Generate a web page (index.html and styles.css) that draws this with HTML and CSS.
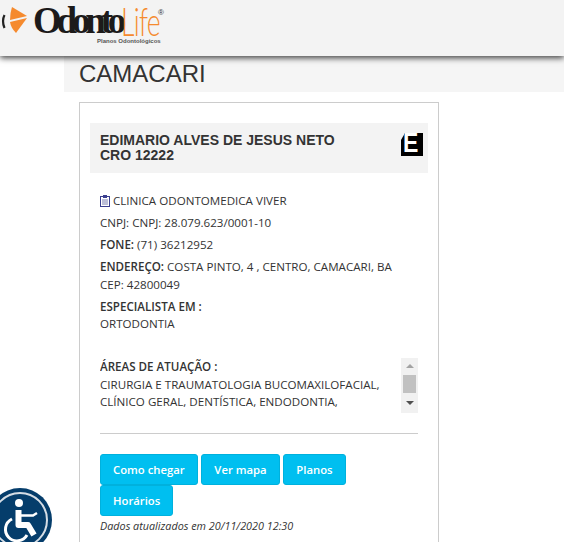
FILE: index.html
```html
<!DOCTYPE html>
<html lang="pt-BR">
<head>
    <meta charset="UTF-8">
    <meta name="viewport" content="width=device-width, initial-scale=1.0">
    <title>OdontoLife - Camacari</title>
    <link rel="stylesheet" href="styles.css">
</head>
<body>

<!-- Topo -->
<header class="topo">
    <div class="logo">
        <svg class="logo-mark" width="30" height="36" viewBox="0 0 30 36">
            <path d="M4.5 15 Q1.5 21 4.5 28" fill="none" stroke="#222" stroke-width="2.2"/>
            <path d="M12 7 L27 16 L10 20 Q10 13 12 7Z" fill="#f58a2e"/>
            <path d="M10 22 L27 18 L16 33 Q11 28 10 22Z" fill="#f58a2e"/>
        </svg>
        <div class="logo-txt">
            <div class="logo-nome"><span class="logo-odonto">Odonto</span><span class="logo-life">Life</span><span class="logo-reg">®</span></div>
            <div class="logo-sub">Planos Odontológicos</div>
        </div>
    </div>
</header>

<main class="conteudo">
    <h1 class="cidade">CAMACARI</h1>

    <div class="card">
        <div class="card-head">
            <div class="nome">EDIMARIO ALVES DE JESUS NETO<br>CRO 12222</div>
            <div class="selo"><span>E</span></div>
        </div>

        <div class="dados">
            <p class="linha">
                <svg class="ico" width="10" height="12" viewBox="0 0 10 12">
                    <rect x="0.5" y="1.5" width="9" height="10" fill="none" stroke="#3b3f8f"/>
                    <rect x="3" y="0" width="4" height="3" fill="#3b3f8f"/>
                    <path d="M2 5h6M2 7h6M2 9h6" stroke="#7a7fb0"/>
                </svg>
                CLINICA ODONTOMEDICA VIVER
            </p>
            <p class="linha">CNPJ: CNPJ: 28.079.623/0001-10</p>
            <p class="linha"><b>FONE:</b> (71) 36212952</p>
            <p class="linha"><b>ENDEREÇO:</b> COSTA PINTO, 4 , CENTRO, CAMACARI, BA<br>CEP: 42800049</p>
            <p class="linha"><b>ESPECIALISTA EM :</b><br>ORTODONTIA</p>
        </div>

        <div class="areas">
            <div class="areas-txt">
                <b>ÁREAS DE ATUAÇÃO :</b><br>
                CIRURGIA E TRAUMATOLOGIA BUCOMAXILOFACIAL,<br>
                CLÍNICO GERAL, DENTÍSTICA, ENDODONTIA,
            </div>
            <div class="barra">
                <span class="seta-cima"></span>
                <span class="barra-pos"></span>
                <span class="seta-baixo"></span>
            </div>
        </div>

        <hr class="divisor">

        <div class="botoes">
            <a class="btn" href="#">Como chegar</a>
            <a class="btn" href="#">Ver mapa</a>
            <a class="btn" href="#">Planos</a>
            <a class="btn" href="#">Horários</a>
        </div>
        <p class="atualizado">Dados atualizados em 20/11/2020 12:30</p>
    </div>
</main>

<!-- Acessibilidade -->
<a class="acess" href="#">
    <svg width="64" height="64" viewBox="0 0 64 64">
        <circle cx="32" cy="32" r="32" fill="#053d6b"/>
        <circle cx="32" cy="32" r="27" fill="none" stroke="#d5dde5" stroke-width="2"/>
        <circle cx="31" cy="15" r="4" fill="#fff"/>
        <path d="M30.5 22 V37 H40 L46 47" fill="none" stroke="#fff" stroke-width="6" stroke-linejoin="round"/>
        <path d="M32 27.5 H45 L49 25" fill="none" stroke="#fff" stroke-width="2.5"/>
        <path d="M24 31 A11.5 11.5 0 1 0 39 47" fill="none" stroke="#fff" stroke-width="3"/>
    </svg>
</a>

</body>
</html>
```

FILE: styles.css
```css
html, body {
    height: 100%;
    overflow: hidden;
}
body {
    margin: 0;
    font-family: "Open Sans", sans-serif;
    font-size: 11.6px;
    color: #333;
    background: #fff;
}
.topo {
    height: 56px;
    background: #f3f3f3;
    box-shadow: 0 2px 6px rgba(0, 0, 0, 0.75);
    position: relative;
}
.logo {
    display: flex;
}
.logo-txt {
    margin-left: 3px;
}
.logo-nome {
    display: flex;
    height: 34px;
    margin-top: 4px;
    line-height: 34px;
}
.logo-odonto {
    width: 88px;
    font-family: "Liberation Serif", serif;
    font-size: 37px;
    font-weight: bold;
    letter-spacing: -5.2px;
    color: #1c1a1a;
}
.logo-life {
    width: 37px;
    font-family: Lato, sans-serif;
    font-size: 39px;
    font-weight: 300;
    letter-spacing: -1px;
    color: #f58a2e;
    transform: scaleX(0.68);
    transform-origin: left;
}
.logo-reg {
    font-family: "Liberation Sans", sans-serif;
    font-size: 8px;
    line-height: 18px;
    color: #333;
}
.logo-sub {
    padding-left: 64px;
    font-family: "Liberation Sans", sans-serif;
    font-size: 6px;
    font-weight: bold;
    color: #555;
}
.conteudo {
    padding-left: 64px;
}
.cidade {
    margin: 0;
    height: 36px;
    padding-left: 15px;
    background: #f5f5f5;
    font-family: "Liberation Sans", sans-serif;
    font-size: 24px;
    font-weight: normal;
    line-height: 36px;
    color: #333;
}
.card {
    width: 338px;
    height: 500px;
    margin: 10px 0 0 15px;
    padding: 20px 10px;
    border: 1px solid #ccc;
}
.card-head {
    display: flex;
    justify-content: space-between;
    align-items: flex-start;
    height: 50px;
    padding: 0 5px 0 10px;
    background: #f3f3f3;
}
.nome {
    margin-top: 10px;
    font-family: "Liberation Sans", sans-serif;
    font-size: 14px;
    font-weight: bold;
    line-height: 15px;
    color: #333;
}
.selo {
    width: 22px;
    height: 23px;
    margin-top: 10px;
    background: #000;
    clip-path: polygon(4px 0, 100% 0, 100% 100%, 0 100%, 0 7px);
}
.selo span {
    display: block;
    width: 17px;
    margin-left: 2px;
    font-family: "Liberation Sans", sans-serif;
    font-size: 27px;
    font-weight: bold;
    line-height: 20px;
    color: #fff;
    transform: scaleX(0.85);
    transform-origin: left;
}
.dados {
    padding: 19px 10px 0;
}
.linha {
    margin: 0 0 4.5px;
    line-height: 17.5px;
}
.linha b {
    font-weight: 600;
}
.ico {
    vertical-align: -2px;
}
.areas {
    display: flex;
    justify-content: space-between;
    height: 55px;
    margin: 25.5px 10px 0;
    line-height: 17.5px;
    overflow: hidden;
}
.areas-txt b {
    font-weight: 600;
}
.barra {
    display: flex;
    flex-direction: column;
    align-items: center;
    width: 17px;
    background: #f1f1f1;
}
.seta-cima {
    margin-top: 6px;
    border: 4px solid transparent;
    border-top: 0;
    border-bottom: 4px solid #a3a3a3;
}
.barra-pos {
    width: 13px;
    height: 18px;
    margin-top: 7px;
    background: #c1c1c1;
}
.seta-baixo {
    margin-top: 8px;
    border: 4px solid transparent;
    border-bottom: 0;
    border-top: 4px solid #505050;
}
.divisor {
    height: 1px;
    margin: 20px 10px 0;
    border: 0;
    background: #ccc;
}
.botoes {
    display: flex;
    flex-wrap: wrap;
    margin: 20px 10px 0;
}
.btn {
    display: block;
    height: 29px;
    margin-right: 3.7px;
    padding: 0 12px;
    background: #00bff0;
    border: 1px solid #00b1dd;
    border-radius: 3px;
    color: #fff;
    font-size: 11.3px;
    font-weight: 600;
    line-height: 29px;
    text-decoration: none;
}
.atualizado {
    margin: 1px 10px 0;
    font-size: 10.8px;
    font-style: italic;
    line-height: 18px;
}
.acess {
    position: absolute;
    left: -12px;
    top: 488px;
}
```
